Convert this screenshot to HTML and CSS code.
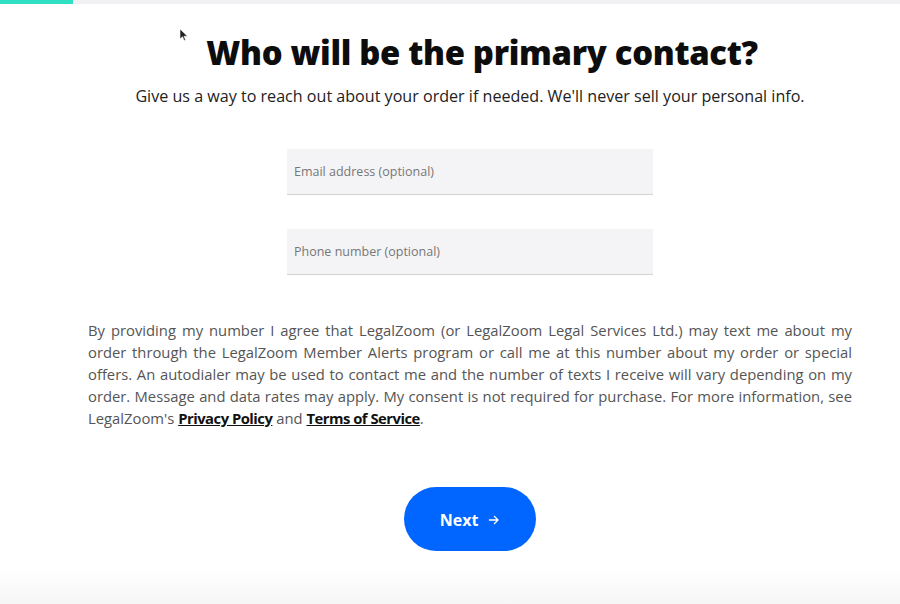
FILE: index.html
```html
<!DOCTYPE html>
<html lang="en">
<head>
<meta charset="utf-8">
<title>Primary contact</title>
<link rel="stylesheet" href="styles.css">
</head>
<body>
<div class="progress"><div class="progress-fill" style="width:73px"></div></div>
<main class="page">
  <h1 class="title">Who will be the primary contact?</h1>
  <p class="subtitle">Give us a way to reach out about your order if needed. We'll never sell your personal info.</p>
  <form class="fields">
    <input class="field" type="email" placeholder="Email address (optional)">
    <input class="field" type="tel" placeholder="Phone number (optional)">
  </form>
  <p class="legal">By providing my number I agree that LegalZoom (or LegalZoom Legal Services Ltd.) may text me about my order through the LegalZoom Member Alerts program or call me at this number about my order or special offers. An autodialer may be used to contact me and the number of texts I receive will vary depending on my order. Message and data rates may apply. My consent is not required for purchase. For more information, see LegalZoom's <a href="#">Privacy Policy</a> and <a href="#">Terms of Service</a>.</p>
  <div class="actions">
    <button class="next" type="button">Next <svg class="arrow" width="12" height="12" viewBox="0 0 12 12"><path d="M1.5 6h8.5M6.5 2.5L10 6l-3.5 3.5" fill="none" stroke="#fff" stroke-width="1.4" stroke-linecap="round" stroke-linejoin="round"/></svg></button>
  </div>
</main>
<div class="footer-fade"></div>
<svg class="cursor" width="10" height="14" viewBox="0 0 10 14"><path d="M1 1v10l2.5-2.3 1.7 3.8 1.4-.6-1.6-3.7H8.5z" fill="#222" stroke="#fff" stroke-width="0.6"/></svg>
</body>
</html>
```
FILE: styles.css
```css
html, body {
  margin: 0;
  padding: 0;
  background: #fff;
  font-family: "Open Sans", "Noto Sans", sans-serif;
  color: #222;
}
body {
  width: 900px;
  height: 604px;
  overflow: hidden;
  position: relative;
}
.progress {
  height: 4px;
  background: #f1f1f4;
}
.progress-fill {
  height: 4px;
  background: #2fe0c2;
}
.page {
  display: flex;
  flex-direction: column;
  align-items: center;
  padding-left: 40px;
}
.title {
  margin: 27px 0 0 0;
  padding-left: 24px;
  font-size: 32.8px;
  font-weight: 800;
  line-height: 44px;
  color: #0d0d0d;
  letter-spacing: -0.3px;
}
.subtitle {
  margin: 10px 0 0 0;
  font-size: 16.1px;
  line-height: 22px;
  color: #222;
}
.fields {
  display: flex;
  flex-direction: column;
  gap: 34px;
  margin-top: 42px;
  width: 366px;
}
.field {
  box-sizing: border-box;
  height: 46px;
  width: 100%;
  border: none;
  border-bottom: 1px solid #d3d3d6;
  background: #f4f4f6;
  padding: 0 7px;
  font-family: "Open Sans", sans-serif;
  font-size: 12.5px;
  outline: none;
}
.field::placeholder {
  color: #777;
}
.legal {
  box-sizing: border-box;
  width: 764px;
  margin: 44px 0 0 0;
  padding: 0;
  font-size: 14.8px;
  line-height: 22px;
  color: #555;
  text-align: justify;
}
.legal a {
  color: #111;
  font-weight: 700;
  letter-spacing: -0.5px;
  text-decoration: underline;
}
.actions {
  margin-top: 58px;
}
.next {
  width: 132px;
  height: 64px;
  border: none;
  border-radius: 32px;
  background: #0066ff;
  color: #fff;
  font-family: "Open Sans", sans-serif;
  font-size: 16px;
  font-weight: 700;
  display: flex;
  align-items: center;
  justify-content: center;
  gap: 10px;
  padding: 2px 0 0 0;
}
.arrow {
  display: block;
}
.footer-fade {
  position: absolute;
  left: 0;
  right: 0;
  bottom: 0;
  height: 36px;
  background: linear-gradient(#fff, #f6f6f6);
}
.cursor {
  position: absolute;
  left: 179px;
  top: 28px;
}
```
